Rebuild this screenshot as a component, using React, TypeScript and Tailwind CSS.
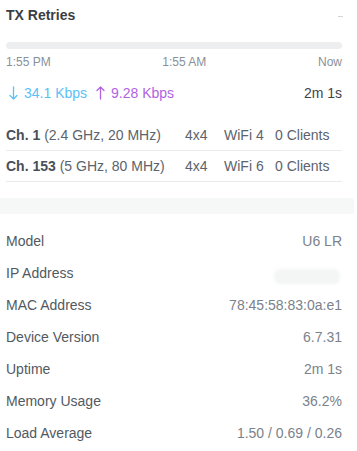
import React from "react";

const details: [string, string | null][] = [
  ["Model", "U6 LR"],
  ["IP Address", null],
  ["MAC Address", "78:45:58:83:0a:e1"],
  ["Device Version", "6.7.31"],
  ["Uptime", "2m 1s"],
  ["Memory Usage", "36.2%"],
  ["Load Average", "1.50 / 0.69 / 0.26"],
];

function Arrow({ up, color }: { up?: boolean; color: string }) {
  return (
    <svg
      width="9"
      height="14"
      viewBox="0 0 9 14"
      fill="none"
      stroke={color}
      strokeWidth="1.3"
      strokeLinecap="round"
      strokeLinejoin="round"
      className={up ? "rotate-180" : ""}
    >
      <path d="M4.5 1 V13 M1 9.5 L4.5 13 L8 9.5" />
    </svg>
  );
}

export default function App() {
  return (
    <div
      className="w-[357px] h-[451px] bg-white overflow-hidden text-[14px]"
      style={{ fontFamily: '"Liberation Sans", Arial, sans-serif' }}
    >
      <div className="pl-[6px] pr-[15px]">
        <div className="pt-[5px] h-[25px] flex items-start justify-between">
          <div className="leading-[20px] font-bold text-[#3a3e44]">TX Retries</div>
          <div className="mt-[11px] w-[5px] h-px bg-[#d3d6d9] mr-[-1px]" />
        </div>
        <div className="mt-[17px] h-[7px] rounded-full bg-[#eceef0]" />
        <div className="mt-[5px] flex justify-between text-[12px] leading-[16px] text-[#8a9099]">
          <span>1:55 PM</span>
          <span>1:55 AM</span>
          <span>Now</span>
        </div>
        <div className="mt-[13px] flex justify-between leading-[20px]">
          <div className="flex items-center">
            <span className="ml-[3px] mr-[6px] flex">
              <Arrow color="#5cc0f6" />
            </span>
            <span className="text-[#5cc0f6]">34.1 Kbps</span>
            <span className="ml-[9px] mr-[6px] flex">
              <Arrow up color="#b064e2" />
            </span>
            <span className="text-[#b064e2]">9.28 Kbps</span>
          </div>
          <span className="text-[#3f444b]">2m 1s</span>
        </div>
        <div className="mt-[17px]">
          {[
            ["Ch. 1", "(2.4 GHz, 20 MHz)", "WiFi 4"],
            ["Ch. 153", "(5 GHz, 80 MHz)", "WiFi 6"],
          ].map(([ch, band, wifi]) => (
            <div
              key={ch}
              className="flex py-[5px] leading-[20px] border-b border-[#e9ebed] text-[#5c636c]"
            >
              <div className="w-[179px]">
                <span className="font-bold text-[#4a4f57]">{ch}</span> {band}
              </div>
              <div className="w-[39px]">4x4</div>
              <div className="w-[51px]">{wifi}</div>
              <div>0 Clients</div>
            </div>
          ))}
        </div>
      </div>
      <div className="mt-[16px] h-[16px] bg-[#f6f7f7] mr-[3px] rounded-r-[3px]" />
      <div className="pl-[6px] pr-[15px] pt-[11px]">
        {details.map(([label, value]) => (
          <div key={label} className="h-[32px] flex items-center justify-between leading-[20px]">
            <span className="text-[#525961]">{label}</span>
            {value ? (
              <span className="text-[#7b828b]">{value}</span>
            ) : (
              <span className="mt-[6px] mr-[2px] w-[66px] h-[15px] rounded-[6px] bg-[#f4f5f5] blur-[1.5px]" />
            )}
          </div>
        ))}
      </div>
    </div>
  );
}
